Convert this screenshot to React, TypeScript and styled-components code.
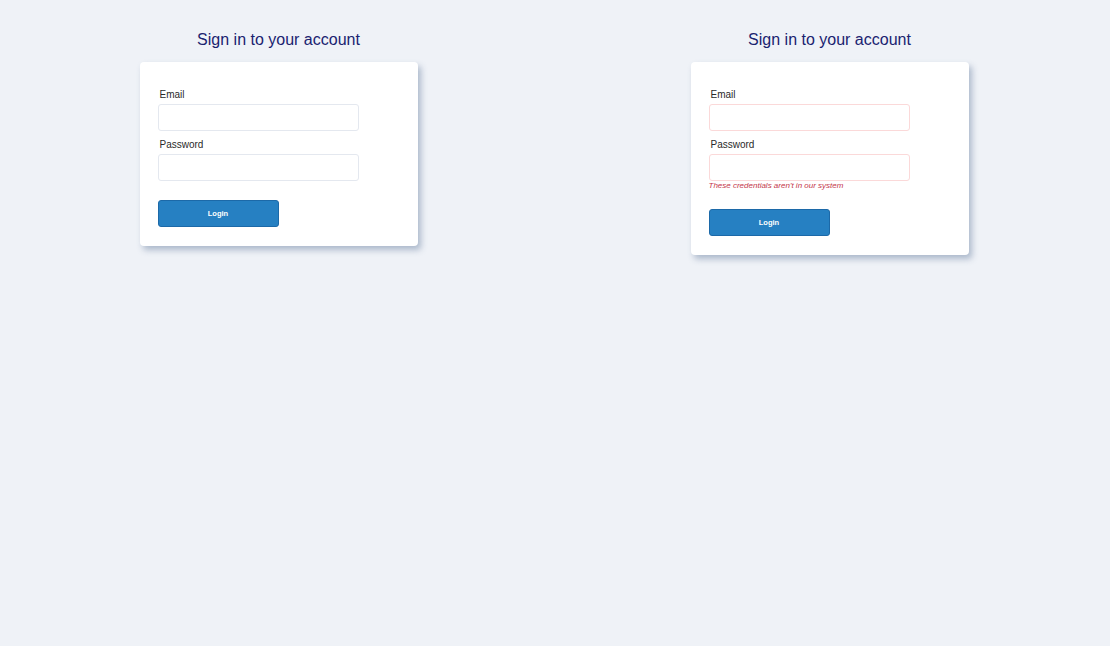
import styled, { createGlobalStyle } from "styled-components";

const GlobalStyle = createGlobalStyle`
  html, body {
    margin: 0;
    padding: 0;
    background: #eff2f7;
    font-family: "Liberation Sans", Arial, sans-serif;
  }
`;

const Page = styled.div`
  box-sizing: border-box;
  display: grid;
  grid-template-columns: 1fr 1fr;
  width: 1110px;
  min-height: 646px;
  padding: 0 5px 0 3px;
  background: #eff2f7;
`;

const Column = styled.div`
  display: flex;
  flex-direction: column;
  align-items: center;
  padding-top: 30px;
`;

const Title = styled.h2`
  margin: 0 0 12px;
  font-size: 16px;
  line-height: 20px;
  font-weight: normal;
  color: #1a2370;
`;

const Card = styled.form`
  box-sizing: border-box;
  width: 278px;
  padding: 27px 20px 19px 18px;
  background: #fff;
  border-radius: 4px;
  box-shadow: 3px 4px 6px rgba(90, 115, 150, 0.45);
  display: flex;
  flex-direction: column;
`;

const Label = styled.label`
  margin: 0 0 3px 2px;
  font-size: 10px;
  line-height: 12px;
  color: #2a2a2a;
`;

const Input = styled.input<{ $error?: boolean }>`
  box-sizing: border-box;
  width: 201px;
  height: 27px;
  margin-bottom: 8px;
  border: 1px solid ${(p) => (p.$error ? "#fbd9d9" : "#e4e8ef")};
  border-radius: 3px;
  background: #fff;
  outline: none;
`;

const ErrorText = styled.div`
  margin: -8px 0 0 0;
  font-size: 8px;
  line-height: 10px;
  font-style: italic;
  color: #c4364a;
`;

const Button = styled.button<{ $afterError?: boolean }>`
  box-sizing: border-box;
  width: 121px;
  height: 27px;
  margin-top: ${(p) => (p.$afterError ? "18px" : "11px")};
  border: 1px solid #1c69a8;
  border-radius: 3px;
  background: #2680c2;
  color: #fff;
  font-family: "Liberation Sans", Arial, sans-serif;
  font-size: 7.5px;
  font-weight: bold;
  cursor: pointer;
`;

const LoginPanel = ({ error }: { error?: string }) => (
  <Column>
    <Title>Sign in to your account</Title>
    <Card onSubmit={(e) => e.preventDefault()}>
      <Label>Email</Label>
      <Input type="email" $error={!!error} />
      <Label>Password</Label>
      <Input type="password" $error={!!error} />
      {error && <ErrorText>{error}</ErrorText>}
      <Button type="submit" $afterError={!!error}>
        Login
      </Button>
    </Card>
  </Column>
);

export default function App() {
  return (
    <>
      <GlobalStyle />
      <Page>
        <LoginPanel />
        <LoginPanel error="These credentials aren't in our system" />
      </Page>
    </>
  );
}
